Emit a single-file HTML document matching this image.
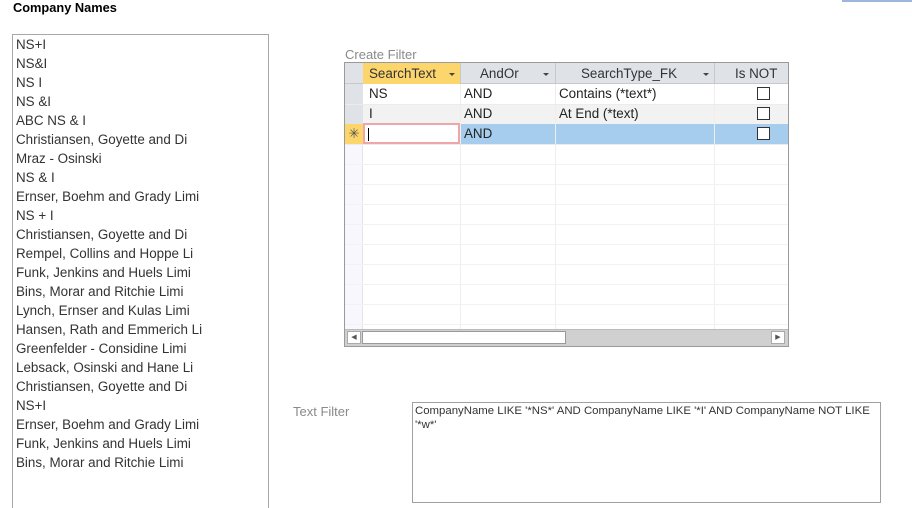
<!DOCTYPE html>
<html><head><style>
*{margin:0;padding:0;box-sizing:border-box}
html,body{width:912px;height:508px;overflow:hidden}
body{background:#fff;font-family:"Liberation Sans",sans-serif;font-size:13.4px;color:#222;position:relative}
.a{position:absolute;white-space:nowrap}
.list div{height:19px;line-height:19px;padding-left:3px;color:#333}
.cell{position:absolute;height:20px;line-height:20px;padding-left:4px}
.hl{position:absolute;height:1px;background:#ececec}
.vl{position:absolute;width:1px;background:#f0eeea}
.cb{position:absolute;width:13px;height:13px;border:1px solid #333;background:#fff}
.dd{position:absolute;width:0;height:0;border-left:3px solid transparent;border-right:3px solid transparent;border-top:3px solid #444}
</style></head><body>
<div class="a" style="left:842px;top:0;width:70px;height:2px;background:#9fb6dc"></div>
<div class="a" style="left:13px;top:0;font-weight:bold;font-size:12.8px;color:#000">Company Names</div>
<div class="a list" style="left:12px;top:34px;width:257px;height:474px;border:1px solid #a8a8a8;border-bottom:none;overflow:hidden">
<div>NS+I</div><div>NS&amp;I</div><div>NS I</div><div>NS &amp;I</div><div>ABC NS &amp; I</div><div>Christiansen, Goyette and Di</div><div>Mraz - Osinski</div><div>NS &amp; I</div><div>Ernser, Boehm and Grady Limi</div><div>NS + I</div><div>Christiansen, Goyette and Di</div><div>Rempel, Collins and Hoppe Li</div><div>Funk, Jenkins and Huels Limi</div><div>Bins, Morar and Ritchie Limi</div><div>Lynch, Ernser and Kulas Limi</div><div>Hansen, Rath and Emmerich Li</div><div>Greenfelder - Considine Limi</div><div>Lebsack, Osinski and Hane Li</div><div>Christiansen, Goyette and Di</div><div>NS+I</div><div>Ernser, Boehm and Grady Limi</div><div>Funk, Jenkins and Huels Limi</div><div>Bins, Morar and Ritchie Limi</div>
</div>

<div class="a" style="left:345px;top:47px;color:#8a8a8a;font-size:13px">Create Filter</div>
<div class="a" style="left:344px;top:62px;width:445px;height:285px;border:1px solid #9a9a9a;background:#fff;overflow:hidden">
 <div class="a" style="left:0;top:0;width:445px;height:21px;background:#dfe2e7;border-bottom:1px solid #c8c8c8"></div>
 <div class="a" style="left:18px;top:0;width:97px;height:21px;background:#fcd66d"></div>
 <div class="a" style="left:24px;top:3px;color:#333">SearchText</div><div class="dd" style="left:104px;top:10px"></div>
 <div class="a" style="left:135px;top:3px;color:#333">AndOr</div><div class="dd" style="left:198px;top:10px"></div>
 <div class="a" style="left:236px;top:3px;color:#333">SearchType_FK</div><div class="dd" style="left:358px;top:10px"></div>
 <div class="a" style="left:390px;top:3px;color:#333">Is NOT</div>
 <div class="vl" style="left:115px;top:0;height:21px;background:#c8c8c8"></div>
 <div class="vl" style="left:210px;top:0;height:21px;background:#c8c8c8"></div>
 <div class="vl" style="left:369px;top:0;height:21px;background:#c8c8c8"></div>
 <div class="a" style="left:0;top:21px;width:18px;height:260px;background:#f7f7fd;border-right:1px solid #e4e4ea"></div>
 <div class="a" style="left:0;top:21px;width:18px;height:40px;background:#dfe2e7"></div>
 <div class="a" style="left:18px;top:41px;width:427px;height:20px;background:#f2f2f2"></div>
 <div class="a" style="left:18px;top:61px;width:427px;height:20px;background:#a6cdee"></div>
 <div class="a" style="left:0;top:61px;width:18px;height:20px;background:#fcd66d;text-align:center;line-height:20px;color:#555">✳</div>
 <div class="a" style="left:18px;top:60px;width:97px;height:21px;border:2px solid #f0a6a6;background:#fff"></div>
 <div class="a" style="left:23px;top:65px;width:1px;height:13px;background:#000"></div>
 <div class="cell" style="left:20px;top:21px">NS</div>
 <div class="cell" style="left:115px;top:21px">AND</div>
 <div class="cell" style="left:210px;top:21px">Contains (*text*)</div>
 <div class="cell" style="left:20px;top:41px">I</div>
 <div class="cell" style="left:115px;top:41px">AND</div>
 <div class="cell" style="left:210px;top:41px">At End (*text)</div>
 <div class="cell" style="left:115px;top:61px">AND</div>
 <div class="cb" style="left:412px;top:24px"></div>
 <div class="cb" style="left:412px;top:44px"></div>
 <div class="cb" style="left:412px;top:64px"></div>
 <div class="vl" style="left:115px;top:21px;height:260px"></div>
 <div class="vl" style="left:210px;top:21px;height:260px"></div>
 <div class="vl" style="left:369px;top:21px;height:260px"></div>
 <div class="hl" style="left:0;top:41px;width:445px"></div>
 <div class="hl" style="left:0;top:81px;width:445px"></div>
 <div class="hl" style="left:0;top:101px;width:445px;background:#f2f2f2"></div>
 <div class="hl" style="left:0;top:121px;width:445px;background:#f2f2f2"></div>
 <div class="hl" style="left:0;top:141px;width:445px;background:#f2f2f2"></div>
 <div class="hl" style="left:0;top:161px;width:445px;background:#f2f2f2"></div>
 <div class="hl" style="left:0;top:181px;width:445px;background:#f2f2f2"></div>
 <div class="hl" style="left:0;top:201px;width:445px;background:#f2f2f2"></div>
 <div class="hl" style="left:0;top:221px;width:445px;background:#f2f2f2"></div>
 <div class="hl" style="left:0;top:241px;width:445px;background:#f2f2f2"></div>
 <div class="hl" style="left:0;top:261px;width:445px;background:#f2f2f2"></div>
 <div class="a" style="left:0;top:266px;width:443px;height:17px;background:#d0d0d0;border-top:1px solid #bbb"></div>
 <div class="a" style="left:2px;top:268px;width:14px;height:13px;background:#fff;border:1px solid #aaa;font-size:7px;line-height:11px;text-align:center;color:#555">◀</div>
 <div class="a" style="left:17px;top:268px;width:204px;height:13px;background:#fff;border:1px solid #999"></div>
 <div class="a" style="left:426px;top:268px;width:14px;height:13px;background:#fff;border:1px solid #aaa;font-size:7px;line-height:11px;text-align:center;color:#555">▶</div>
</div>

<div class="a" style="left:293px;top:404px;color:#8a8a8a;font-size:13px">Text Filter</div>
<div class="a" style="left:412px;top:402px;width:469px;height:101px;border:1px solid #a0a0a0;white-space:normal;padding:1px 2px;font-size:11.4px;line-height:14px;color:#333">CompanyName LIKE '*NS*' AND CompanyName LIKE '*I' AND CompanyName NOT LIKE<br>'*w*'</div>
</body></html>
